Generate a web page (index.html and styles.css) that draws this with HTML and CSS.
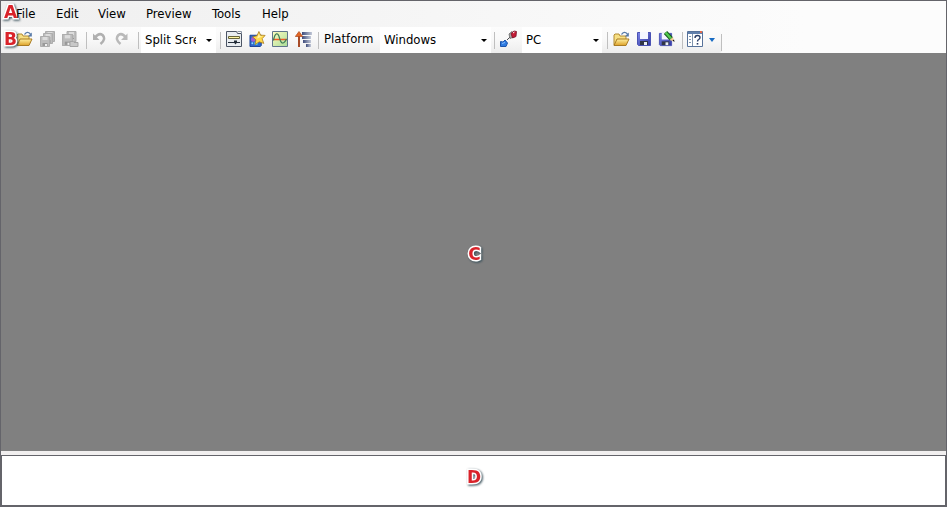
FILE: index.html
```html
<!DOCTYPE html>
<html lang="en">
<head>
<meta charset="utf-8">
<title>Preview</title>
<link rel="stylesheet" href="styles.css">
</head>
<body>
<svg width="0" height="0" class="defs">
  <defs>
    <linearGradient id="gold" x1="0" y1="0" x2="0" y2="1"><stop offset="0" stop-color="#fff0a0"/><stop offset="1" stop-color="#dda128"/></linearGradient>
    <linearGradient id="disk" x1="0" y1="0" x2="1" y2="1"><stop offset="0" stop-color="#7d86e8"/><stop offset="1" stop-color="#3138a0"/></linearGradient>
    <linearGradient id="green" x1="0" y1="0" x2="1" y2="1"><stop offset="0" stop-color="#fffdc0"/><stop offset="1" stop-color="#a8dc98"/></linearGradient>
    <linearGradient id="bar" x1="0" y1="0" x2="1" y2="0"><stop offset="0" stop-color="#3e4c7c"/><stop offset="1" stop-color="#c4cad8"/></linearGradient>
    <symbol id="folder" viewBox="0 0 17 16">
      <path d="M1 14V4l1-1h4l1 2h6v3" fill="#f7df83" stroke="#b28b32"/>
      <path d="M1 14.500 4 8h12l-3 6.500z" fill="url(#gold)" stroke="#a97b22"/>
      <path d="M8.500 3.500Q11-.5 14.500 3" fill="none" stroke="#5679a7" stroke-width="1.300"/>
      <path d="M15.800 1.500v4h-4z" fill="#5679a7"/>
    </symbol>
    <symbol id="floppy" viewBox="0 0 16 16">
      <path d="M1.500 1.500h13v13h-12l-1-1z" fill="url(#disk)" stroke="#4a52b4"/>
      <path d="M4 1h8v7H4z" fill="#f4f6ff"/>
      <path d="M4 10h8v4H4z" fill="#303545"/><path d="M8 11h3v3H8z" fill="#e9eef5"/>
    </symbol>
    <symbol id="grayfloppy" viewBox="0 0 10 11">
      <path d="M.5.5h9v10h-9z" fill="#bdbdbd" stroke="#adadad"/>
      <path d="M2.500 1h5v3h-5z" fill="#dcdcdc"/><path d="M2.500 7h5v3h-5z" fill="#999"/><path d="M5 8h2v2H5z" fill="#eee"/>
    </symbol>
  </defs>
</svg>
<div class="window">
  <nav class="menu">
    <span class="m-file">File</span><span class="m-edit">Edit</span><span class="m-view">View</span><span class="m-preview">Preview</span><span class="m-tools">Tools</span><span>Help</span>
  </nav>
  <div class="toolbar">
    <div class="strip">
      <svg class="open" width="17" height="16"><use href="#folder"/></svg>
      <svg class="saveall" width="16" height="16"><use href="#grayfloppy" x="5" y="0" width="10" height="11"/><use href="#grayfloppy" x="3" y="2" width="10" height="11"/><use href="#grayfloppy" x="0" y="5" width="10" height="11"/></svg>
      <svg class="saveas" width="17" height="16"><use href="#grayfloppy" x="4" y="0" width="11" height="11"/><use href="#grayfloppy" x="0" y="3" width="11" height="12"/><path d="M8 15.500v-5h3l1 1h4v4z" fill="#c8c8c8" stroke="#a4a4a4"/></svg>
      <i class="sep s1"></i>
      <svg class="undo" width="14" height="16" viewBox="0 0 14 16"><path d="M2 6.500Q6 1.500 9.500 4q4 4-2 9" fill="none" stroke="#b0b0b0" stroke-width="2.500"/><path d="M0 2.500v6.500h6.500z" fill="#b0b0b0"/></svg>
      <svg class="redo" width="14" height="16" viewBox="0 0 14 16"><path d="M12 6.500Q8 1.500 4.500 4q-4 4 2 9" fill="none" stroke="#b9b9b9" stroke-width="2.500"/><path d="M13.500 2.500v6.500H7z" fill="#b9b9b9"/></svg>
      <i class="sep s2"></i>
      <div class="combo split"><span class="value">Split Screen</span><b class="arrow"></b></div>
      <i class="sep s3"></i>
      <svg class="first" width="16" height="16" viewBox="0 0 16 16"><path d="M.5.5h10l1 2h4v13H.5z" fill="#e9edf1" stroke="#4c5565"/><path d="M11.500.5h4v2" fill="none" stroke="#8993a3"/><path d="M2.500 5.500h11v2h-11z" fill="#fff6a2" stroke="#67643a"/><path d="M2 11.500h12" stroke="#27303d"/><path d="M8 9.500h3v2l-1.500 2-1.500-2z" fill="#222c38"/></svg>
      <svg class="gap7" width="17" height="16" viewBox="0 0 17 17"><path d="M.5 4.500h12v11l-1 1H.5z" fill="#3068ce" stroke="#183f91"/><circle cx="4" cy="9" r="2.500" fill="#a65bd2"/><circle cx="7" cy="13" r="2" fill="#46c9ee"/><circle cx="3" cy="13" r="1" fill="#8bdbff"/><path d="m10 .5 1.800 3.900 4.800.3-3.200 3.500 1.800 5-4.900-1.700-4.400 3 .9-5.200-3.500-3L8 5z" fill="#ffda4f" stroke="#a87817" stroke-width=".8"/><path d="m10 3 1 2.500 3 .1-6 2.400z" fill="#fff4ad"/></svg>
      <svg class="gap6" width="16" height="16" viewBox="0 0 16 16"><path d="M.5.5h15v15H.5z" fill="url(#green)" stroke="#60768c"/><path d="M1 8.500h14" stroke="#f05a24" stroke-width="1.500"/><path d="M1.500 9.500C3 1 6 1 7.500 7s4 7 7 1" fill="none" stroke="#3f7c56" stroke-width="1.200"/></svg>
      <svg class="gap7" width="17" height="17" viewBox="0 0 17 17"><path d="M7 1h10v3H7z" fill="url(#bar)"/><path d="M7 5h9v3H7z" fill="url(#bar)"/><path d="M8 9h8v3H8z" fill="url(#bar)"/><path d="M11 13h5v3h-5z" fill="url(#bar)"/><path d="M4 16V4" stroke="#a84c28" stroke-width="2"/><path d="M.3 5.500 4 .5l3.700 5z" fill="#e56824" stroke="#a8491f" stroke-width=".7"/></svg>
      <i class="sep s4"></i>
      <span class="label">Platform</span>
      <div class="combo platform"><span class="value">Windows</span><b class="arrow"></b></div>
      <i class="sep s5"></i>
      <svg class="connect" width="17" height="18" viewBox="0 0 17 18"><path d="m7 10 3-3" stroke="#4b4b50"/><path d="m9 4 3-2.500 3 5-5 2z" fill="#a9a9a9" stroke="#666" stroke-width=".8"/><path d="m11 3.500 3-2.500 2.500.5-.5 5-3.500 1.500z" fill="#c51b35" stroke="#76142a" stroke-width=".8"/><path d="m13 3 1.500-1" stroke="#fff"/><path d="M.5 11.500 3 12l2-2 2.500 3-1.500 3.500H.5z" fill="#2f7be0" stroke="#1c54ad"/><path d="m2 13.500 3-1" stroke="#86bdff"/></svg>
      <div class="combo pc"><span class="value">PC</span><b class="arrow"></b></div>
      <i class="sep s6"></i>
      <svg class="gap5" width="17" height="16"><use href="#folder"/></svg>
      <svg class="gap6" width="16" height="16"><use href="#floppy"/></svg>
      <svg class="gap6" width="17" height="18" viewBox="0 0 17 18"><use href="#floppy" x="0" y="2" width="15" height="15"/><path d="m7.500 2.500 6 6.500" stroke="#17581d" stroke-width="4.500"/><path d="m7.500 2.500 5.500 6" stroke="#52c94e" stroke-width="2.500"/><path d="m11.500 10 3.500-3 1 4.500z" fill="#f1ce94"/><path d="m14.500 10.500 1.500-1 .5 2.500z" fill="#111"/></svg>
      <i class="sep s7"></i>
      <svg class="gap4" width="16" height="16" viewBox="0 0 16 16"><path d="M.5.5h15v15H.5z" fill="#fff" stroke="#57729a"/><path d="M1 1h14v2H1z" fill="#6180ac"/><path d="M13 0h2v2h-2z" fill="#e26a4c"/><path d="M5.500 3v12M2 5.500h2M2 8.500h2M2 11.500h2" stroke="#8094ad"/><path d="M8 7q0-2.500 2.500-2.500T13 6.500q0 1.200-1.300 2-1.200.7-1.200 2" fill="none" stroke="#293d66" stroke-width="1.400"/><path d="M9.700 12h1.600v1.600H9.700z" fill="#293d66"/></svg>
      <b class="bluearrow"></b>
      <i class="sep end"></i>
    </div>
  </div>
  <main class="workspace"><span class="marker">C</span></main>
  <div class="splitter"></div>
  <section class="panel"><span class="marker">D</span></section>
</div>
<span class="marker a">A</span><span class="marker b">B</span>
</body>
</html>
```
FILE: styles.css
```css
* { box-sizing: border-box; }
body { margin: 0; font: 13px "DejaVu Sans Condensed", "DejaVu Sans", sans-serif; font-stretch: condensed; color: #000; overflow: hidden; }
.defs { position: absolute; }
.window { width: 947px; height: 507px; border: 1px solid #64646a; display: flex; flex-direction: column; background: linear-gradient(90deg, #efefef, #fcfcfc 85%); }
.menu { height: 26px; padding-left: 15px; display: flex; align-items: center; flex: none; line-height: 16px; }
.m-file { width: 40px; position: relative; z-index: 2; }
.m-edit { width: 42px; }
.m-view { width: 48px; }
.m-preview { width: 66px; }
.m-tools { width: 50px; }
.toolbar { height: 26px; flex: none; }
.strip { width: 721px; height: 26px; padding: 0 0 1px 15px; display: flex; align-items: center; background: linear-gradient(#fcfcfc 0, #f9f9f9 45%, #ededed); border-radius: 0 3px 3px 0; }
.strip > * { flex: none; }
.strip svg { display: block; margin-bottom: 1px; }
.saveall { margin-left: 7px; }
.saveas { margin-left: 6px; }
.sep { width: 1px; height: 17px; margin-top: 2px; background: #bfbfbf; }
.s1 { margin-left: 7px; }
.undo { margin-left: 6px; }
.redo { margin-left: 7px; }
.s2 { margin-left: 10px; }
.combo { background: #fff; height: 26px; margin-bottom: -1px; padding-bottom: 1px; display: flex; align-items: center; overflow: hidden; }
.value { overflow: hidden; white-space: nowrap; flex: none; padding-bottom: 1px; }
.arrow { width: 0; border: 3px solid transparent; border-top-color: #000; border-bottom: 0; margin: 2px 0 0 auto; flex: none; }
.split { width: 75px; margin-left: 2px; padding: 0 4px 1px; }
.split .value { width: 51px; }
.s3 { margin-left: 4px; }
.first { margin-left: 5px; }
.gap7 { margin-left: 7px; }
.s4 { margin-left: 6px; }
.label { margin-left: 5px; width: 56px; padding-bottom: 3px; }
.platform { width: 111px; padding: 0 4px 1px; }
.s5 { margin-left: 3px; }
.connect { margin-left: 5px; }
.pc { width: 80px; margin-left: 5px; padding: 0 3px 1px 4px; }
.s6 { margin-left: 5px; }
.gap5 { margin-left: 5px; }
.gap6 { margin-left: 6px; }
.s7 { margin-left: 7px; }
.gap4 { margin-left: 4px; }
.bluearrow { margin-left: 6px; border: 3.5px solid transparent; border-top: 4px solid #176bc3; border-bottom: 0; }
.end { margin-left: auto; margin-top: 6px; }
.workspace { height: 398px; flex: none; background: #808080; display: flex; align-items: center; justify-content: center; padding-left: 2px; }
.workspace .marker { margin-top: 4px; }
.splitter { height: 4px; flex: none; background: #f1efef; }
.panel { flex: 1; background: #fff; border: 1px solid #64646a; display: flex; align-items: center; justify-content: center; padding: 0 0 8px 1px; }
.marker { font: bold 17px/20px "DejaVu Sans", sans-serif; color: #d9232a; -webkit-text-stroke: 3px #fff; paint-order: stroke fill; filter: drop-shadow(1px 1px 1px #344c56); }
.a { position: absolute; left: 4px; top: 2px; }
.b { position: absolute; left: 4px; top: 29px; }
```
